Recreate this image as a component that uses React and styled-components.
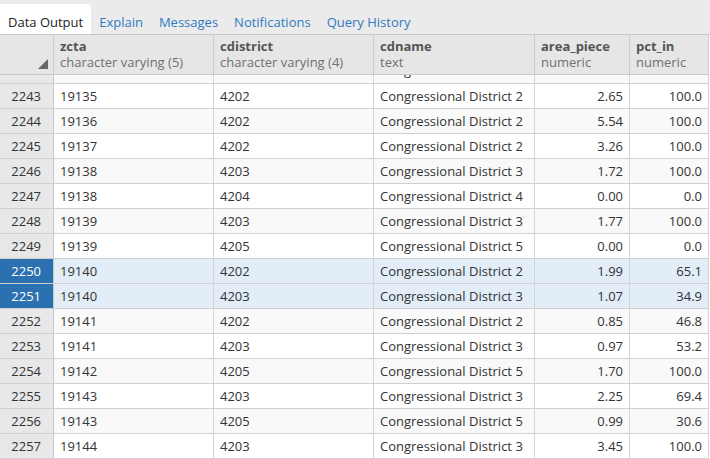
import styled, { createGlobalStyle } from "styled-components";

const GlobalStyle = createGlobalStyle`
  html, body {
    margin: 0;
    padding: 0;
    background: #ffffff;
    font-family: "Open Sans", "Noto Sans", sans-serif;
    font-size: 13px;
    color: #333;
  }
`;

const COLS = "54px 160px 160px 161px 95px 79px";

const Panel = styled.div`
  width: 710px;
  height: 459px;
  overflow: hidden;
  display: flex;
  flex-direction: column;
`;

const TabBar = styled.div`
  height: 34px;
  flex: none;
  display: flex;
  align-items: flex-end;
  background: #ebebeb;
  border-bottom: 1px solid #c8c8c8;
`;

const Tab = styled.div`
  height: 30px;
  padding: 5px 8px 0 8px;
  display: flex;
  align-items: center;
  box-sizing: border-box;
  color: ${(p) => (p.$active ? "#222" : "#2f7bbf")};
  background: ${(p) => (p.$active ? "#ffffff" : "transparent")};
  border-top-right-radius: 4px;
  white-space: nowrap;
`;

const Grid = styled.div`
  display: grid;
  grid-template-columns: ${COLS};
  width: 709px;
`;

const HeaderRow = styled(Grid)`
  height: 39px;
  flex: none;
  background: #e6e6e6;
  border-bottom: 1px solid #c8c8c8;
`;

const HeadCell = styled.div`
  position: relative;
  box-sizing: border-box;
  border-right: 1px solid #cccccc;
  padding: 3px 6px 0 6px;
  display: flex;
  flex-direction: column;
  line-height: 16px;
`;

const ColName = styled.span`
  font-weight: 700;
  color: #555;
`;

const ColType = styled.span`
  color: #707070;
`;

const Corner = styled.div`
  position: absolute;
  right: 5px;
  bottom: 5px;
  width: 0;
  height: 0;
  border-style: solid;
  border-width: 0 0 10px 10px;
  border-color: transparent transparent #666 transparent;
`;

const Body = styled.div`
  flex: 1;
  min-height: 0;
  overflow: hidden;
`;

const Row = styled(Grid)`
  grid-template-rows: ${(p) => (p.$partial ? "9px" : "25px")};
  overflow: hidden;
  flex: none;
`;

const Cell = styled.div`
  box-sizing: border-box;
  height: 25px;
  align-self: end;
  border-right: 1px solid #d4d4d4;
  border-bottom: 1px solid #cfcfcf;
  padding: 0 6px ${(p) => (p.$partial ? "3px" : "1px")} 6px;
  display: flex;
  align-items: center;
  justify-content: ${(p) => (p.$num ? "flex-end" : "flex-start")};
  white-space: nowrap;
  color: #333;
  background: ${(p) =>
    p.$selected ? "#e2edf8" : p.$even ? "#f9f9f9" : "#ffffff"};
`;

const RowHead = styled(Cell)`
  justify-content: flex-end;
  padding-right: 12px;
  background: ${(p) => (p.$selected ? "#2b70b0" : "#e8e8e8")};
  color: ${(p) => (p.$selected ? "#ffffff" : "#333")};
  border-right: 1px solid #c8c8c8;
`;

const columns = [
  { name: "zcta", type: "character varying (5)" },
  { name: "cdistrict", type: "character varying (4)" },
  { name: "cdname", type: "text" },
  { name: "area_piece", type: "numeric" },
  { name: "pct_in", type: "numeric" },
];

const rows = [
  [2242, "19134", "4202", "Congressional District 2", "1.00", "100.0"],
  [2243, "19135", "4202", "Congressional District 2", "2.65", "100.0"],
  [2244, "19136", "4202", "Congressional District 2", "5.54", "100.0"],
  [2245, "19137", "4202", "Congressional District 2", "3.26", "100.0"],
  [2246, "19138", "4203", "Congressional District 3", "1.72", "100.0"],
  [2247, "19138", "4204", "Congressional District 4", "0.00", "0.0"],
  [2248, "19139", "4203", "Congressional District 3", "1.77", "100.0"],
  [2249, "19139", "4205", "Congressional District 5", "0.00", "0.0"],
  [2250, "19140", "4202", "Congressional District 2", "1.99", "65.1"],
  [2251, "19140", "4203", "Congressional District 3", "1.07", "34.9"],
  [2252, "19141", "4202", "Congressional District 2", "0.85", "46.8"],
  [2253, "19141", "4203", "Congressional District 3", "0.97", "53.2"],
  [2254, "19142", "4205", "Congressional District 5", "1.70", "100.0"],
  [2255, "19143", "4203", "Congressional District 3", "2.25", "69.4"],
  [2256, "19143", "4205", "Congressional District 5", "0.99", "30.6"],
  [2257, "19144", "4203", "Congressional District 3", "3.45", "100.0"],
];

const selected = [2250, 2251];

export default function App() {
  return (
    <>
      <GlobalStyle />
      <Panel>
        <TabBar>
          <Tab $active>Data Output</Tab>
          <Tab>Explain</Tab>
          <Tab>Messages</Tab>
          <Tab>Notifications</Tab>
          <Tab>Query History</Tab>
        </TabBar>
        <HeaderRow>
          <HeadCell>
            <Corner />
          </HeadCell>
          {columns.map((c) => (
            <HeadCell key={c.name}>
              <ColName>{c.name}</ColName>
              <ColType>{c.type}</ColType>
            </HeadCell>
          ))}
        </HeaderRow>
        <Body>
          {rows.map(([n, zcta, cd, name, area, pct], i) => {
            const sel = selected.includes(n);
            const even = n % 2 === 0;
            const part = i === 0;
            return (
              <Row key={n} $partial={part}>
                <RowHead $selected={sel} $partial={part}>{n}</RowHead>
                <Cell $selected={sel} $even={even} $partial={part}>{zcta}</Cell>
                <Cell $selected={sel} $even={even} $partial={part}>{cd}</Cell>
                <Cell $selected={sel} $even={even} $partial={part}>{name}</Cell>
                <Cell $selected={sel} $even={even} $partial={part} $num>{area}</Cell>
                <Cell $selected={sel} $even={even} $partial={part} $num>{pct}</Cell>
              </Row>
            );
          })}
        </Body>
      </Panel>
    </>
  );
}
